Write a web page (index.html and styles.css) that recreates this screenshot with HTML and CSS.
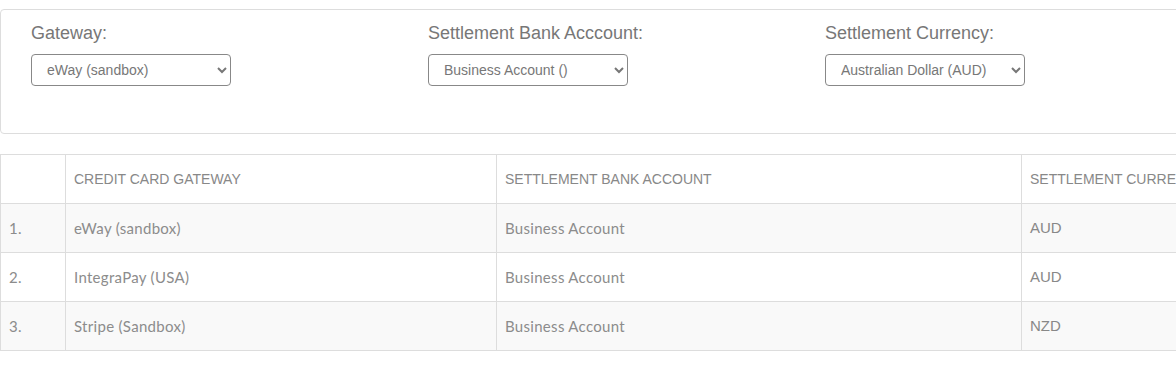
FILE: index.html
```html
<!DOCTYPE html>
<html lang="en">
<head>
    <meta charset="UTF-8">
    <title>Gateway Settings</title>
    <link rel="stylesheet" href="styles.css">
</head>
<body>
    <div class="filter-card">
        <div class="filter-row">
            <div class="filter-col">
                <label for="gatewaySelect">Gateway:</label>
                <select id="gatewaySelect">
                    <option>eWay (sandbox)</option>
                    <option>IntegraPay (USA)</option>
                    <option>Stripe (Sandbox)</option>
                </select>
            </div>
            <div class="filter-col">
                <label for="accountSelect">Settlement Bank Acccount:</label>
                <select id="accountSelect">
                    <option>Business Account ()</option>
                </select>
            </div>
            <div class="filter-col">
                <label for="currencySelect">Settlement Currency:</label>
                <select id="currencySelect">
                    <option>Australian Dollar (AUD)</option>
                    <option>New Zealand Dollar (NZD)</option>
                </select>
            </div>
        </div>
    </div>

    <table class="gateway-table">
        <colgroup>
            <col class="col-num">
            <col class="col-gateway">
            <col class="col-account">
            <col class="col-currency">
        </colgroup>
        <thead>
            <tr>
                <th></th>
                <th>Credit Card Gateway</th>
                <th>Settlement Bank Account</th>
                <th>Settlement Currency</th>
            </tr>
        </thead>
        <tbody>
            <tr>
                <td class="num">1.</td>
                <td class="name">eWay (sandbox)</td>
                <td class="name">Business Account</td>
                <td>AUD</td>
            </tr>
            <tr>
                <td class="num">2.</td>
                <td class="name">IntegraPay (USA)</td>
                <td class="name">Business Account</td>
                <td>AUD</td>
            </tr>
            <tr>
                <td class="num">3.</td>
                <td class="name">Stripe (Sandbox)</td>
                <td class="name">Business Account</td>
                <td>NZD</td>
            </tr>
        </tbody>
    </table>
</body>
</html>
```

FILE: styles.css
```css
body {
    font-family: "Liberation Sans", Arial, sans-serif;
    margin: 0;
    padding-top: 9px;
    background-color: #fff;
    color: #888;
    overflow: hidden;
    width: 1400px;
}
.filter-card {
    border: 1px solid #ddd;
    border-radius: 4px;
    padding: 13px 0 0 30px;
    height: 110px;
    margin-bottom: 20px;
}
.filter-row {
    display: flex;
}
.filter-col {
    width: 397px;
}
label {
    display: block;
    font-size: 18px;
    color: #777;
    margin-bottom: 10px;
}
select {
    width: 200px;
    height: 32px;
    padding: 0 11px;
    font-family: "Liberation Sans", Arial, sans-serif;
    font-size: 14px;
    color: #777;
    background-color: #fff;
    border: 1px solid #888;
    border-radius: 4px;
}
.gateway-table {
    border-collapse: collapse;
    table-layout: fixed;
    width: 1421px;
    border: 1px solid #ddd;
}
.col-num { width: 65px; }
.col-gateway { width: 431px; }
.col-account { width: 525px; }
.col-currency { width: 400px; }
.gateway-table th,
.gateway-table td {
    border: 1px solid #ddd;
    height: 48px;
    padding: 0 8px;
    text-align: left;
    vertical-align: middle;
    white-space: nowrap;
    overflow: hidden;
}
.gateway-table th {
    font-weight: normal;
    font-size: 14px;
    text-transform: uppercase;
    color: #888;
}
.gateway-table td {
    font-size: 15px;
    color: #888;
    height: 47px;
    padding-bottom: 1px;
}
.gateway-table td.num,
.gateway-table td.name {
    font-family: Lato, "Liberation Sans", sans-serif;
    letter-spacing: 0.3px;
    color: #8c8c8c;
}
.gateway-table tbody tr:nth-child(odd) {
    background-color: #f9f9f9;
}
```
